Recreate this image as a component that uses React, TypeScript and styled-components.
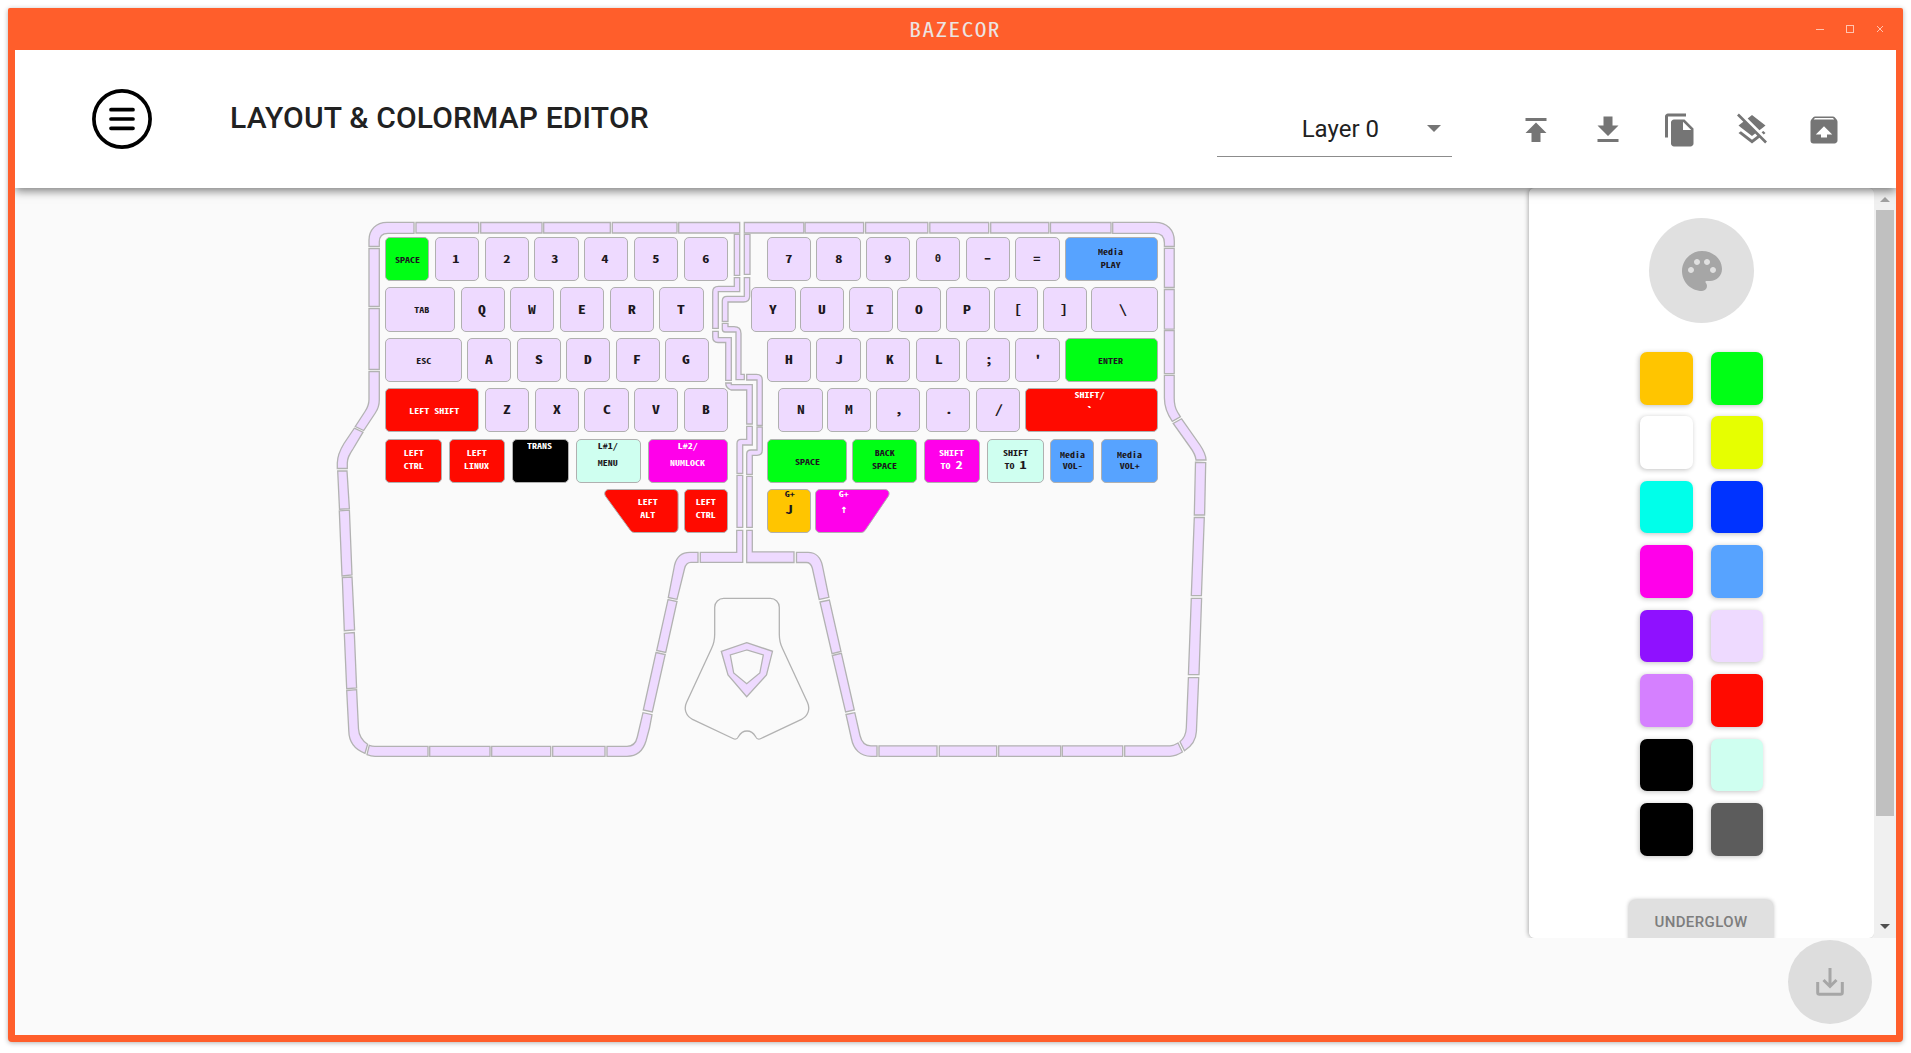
import React from "react";
import styled, { createGlobalStyle } from "styled-components";
import { MdPublish, MdGetApp, MdFileCopy, MdLayersClear, MdUnarchive, MdPalette } from "react-icons/md";

const MONO = `"Noto Sans Mono CJK SC", "DejaVu Sans Mono", monospace`;
const MONO_ALT = `"DejaVu Sans Mono", monospace`;
const ORANGE = "#ff5e2b";
const LILAC = "#eedaff";
const RED = "#ff0a00";
const GREEN = "#00ff15";
const BLUE = "#57a3ff";
const PINK = "#ff00ea";
const MINT = "#cffff0";
const AMBER = "#ffc500";

const Global = createGlobalStyle`
  *, *::before, *::after { box-sizing: border-box; }
  html, body { margin: 0; background: #fff; }
  body { font-family: Roboto, "Liberation Sans", sans-serif; color: #212121; overflow: hidden; }
`;

const Page = styled.div`
  height: 1053px;
  padding: 8px 8px 11px;
`;

const Frame = styled.div`
  display: flex;
  flex-direction: column;
  height: 1034px;
  padding: 0 7px 7px;
  background: ${ORANGE};
  border-radius: 2px 2px 4px 4px;
  box-shadow: 0 1px 5px rgba(0, 0, 0, 0.3);
`;

const TitleBar = styled.div`
  display: grid;
  grid-template-columns: 1fr auto 1fr;
  align-items: center;
  height: 42px;
  flex: none;
`;

const AppName = styled.div`
  grid-column: 2;
  font: 400 19.4px/40px ${MONO};
  letter-spacing: 1.2px;
  transform: scaleX(1.2);
  color: #ece4e2;
`;

const WindowButtons = styled.div`
  display: flex;
  justify-content: flex-end;
  gap: 18px;
  padding-right: 10px;
  svg { display: block; }
`;

const Header = styled.header`
  display: flex;
  align-items: center;
  height: 138px;
  flex: none;
  padding: 0 54px 0 77px;
  background: #fff;
  position: relative;
  z-index: 2;
  box-shadow: 0 3px 9px rgba(0, 0, 0, 0.5);
  clip-path: inset(0 0 -20px 0);
`;

const Heading = styled.h1`
  margin: -2px auto 0 78px;
  font-size: 30px;
  font-weight: 500;
  line-height: 36px;
  letter-spacing: 0.17px;
  white-space: nowrap;
`;

const LayerSelect = styled.div`
  display: flex;
  align-items: center;
  justify-content: flex-end;
  width: 235px;
  height: 55px;
  margin: 20px 66px 0 0;
  padding-right: 11px;
  border-bottom: 1px solid #8c8c8c;
  font-size: 24px;
  gap: 48px;
`;

const Caret = styled.i`
  border: 7px solid transparent;
  border-top-color: #757575;
  border-bottom: 0;
`;

const Tools = styled.div`
  display: flex;
  gap: 36px;
  margin-top: 22px;
  color: #757575;
  font-size: 36px;
  svg { display: block; }
`;

const Main = styled.main`
  display: flex;
  height: 750px;
  flex: none;
  background: #fafafa;
`;

const Canvas = styled.section`
  flex: 1;
  padding: 49px 0 0 370px;
`;

const Board = styled.div`
  position: relative;
  display: flex;
  width: 774px;
`;

const Outline = styled.svg`
  position: absolute;
  left: -55px;
  top: -22px;
  width: 885px;
  height: 550px;
  stroke: #b2b2b2;
  stroke-width: 1.3;
  fill: ${LILAC};
`;

const Half = styled.div<{ $w: number }>`
  position: relative;
  display: flex;
  flex-direction: column;
  width: ${(p) => p.$w}px;
  gap: 6.2px;
`;

const Row = styled.div<{ $lead: number; $gap: number }>`
  display: flex;
  height: 44.2px;
  gap: ${(p) => p.$gap}px;
  padding-left: ${(p) => p.$lead}px;
`;

const KeyCap = styled.div<{ $w: number; $bg: string; $ink: string; $pull: number; $shaped: boolean }>`
  display: grid;
  flex: none;
  justify-items: center;
  align-items: start;
  width: ${(p) => p.$w}px;
  height: 44.2px;
  margin-left: ${(p) => p.$pull}px;
  border: 1px solid ${(p) => (p.$shaped ? "transparent" : "#b0b0b0")};
  border-radius: 5px;
  background: ${(p) => (p.$shaped ? "none" : p.$bg)};
  color: ${(p) => p.$ink};
`;

const KeyShape = styled.svg`
  grid-area: 1 / 1;
  margin: -1px;
  overflow: visible;
  stroke: #b0b0b0;
`;

const Legend = styled.span<{ $y: number; $s: number; $dx: number; $alt: boolean }>`
  grid-area: 1 / 1;
  position: relative;
  height: ${(p) => p.$s}px;
  margin-top: ${(p) => p.$y - 1 - p.$s * 0.936}px;
  margin-left: ${(p) => p.$dx * 2}px;
  font: 700 ${(p) => p.$s}px/${(p) => p.$s}px ${(p) => (p.$alt ? MONO_ALT : MONO)};
  transform: scaleX(${(p) => (p.$alt ? 1 : 1.3)});
  white-space: pre;
  b { font-size: 11px; line-height: 1px; }
`;

const Drawer = styled.aside`
  display: flex;
  flex-direction: column;
  align-items: center;
  width: 345px;
  height: 750px;
  padding-top: 30px;
  overflow: hidden;
  background: #fff;
  border-radius: 6px;
`;

const DrawerEdge = styled.div`
  width: 345px;
  border-radius: 6px;
  box-shadow: -1px 0 4px rgba(0, 0, 0, 0.3);
  clip-path: inset(0 0 0 -10px);
`;

const PaletteButton = styled.button`
  display: grid;
  place-items: center;
  width: 105px;
  height: 105px;
  flex: none;
  padding: 0;
  border: 0;
  border-radius: 50%;
  background: #e0e0e0;
  color: #a6a6a6;
  font-size: 48px;
`;

const Swatches = styled.div`
  display: grid;
  grid-template-columns: 53px 52px;
  grid-auto-rows: 52.6px;
  gap: 11.85px 18px;
  margin: 29px 0 0 -1px;
  padding-left: 1px;
`;

const Swatch = styled.div<{ $c: string }>`
  border-radius: 7px;
  background: ${(p) => p.$c};
  box-shadow: -1px 1px 5px rgba(0, 0, 0, 0.24);
`;

const UnderglowButton = styled.button`
  flex: none;
  width: 144px;
  height: 44px;
  margin: 44.5px 1px 0 0;
  padding: 0;
  border: 0;
  border-radius: 6px;
  background: #e0e0e0;
  color: #7d7d7d;
  box-shadow: 0 0 4px rgba(0, 0, 0, 0.3);
  font: 500 15px/43px Roboto, sans-serif;
  letter-spacing: 0.4px;
`;

const ScrollTrack = styled.div`
  display: flex;
  flex-direction: column;
  align-items: center;
  width: 22px;
  padding: 9px 0 9px;
  background: #f0f0f0;
`;

const ScrollThumb = styled.div`
  width: 18px;
  height: 606px;
  margin: 8px 0 auto;
  background: #c0c0c0;
`;

const ScrollArrow = styled.i<{ $up?: boolean }>`
  border: 5px solid transparent;
  ${(p) => (p.$up ? "border-top: 0; border-bottom-color: #a0a0a0;" : "border-bottom: 0; border-top-color: #505050;")}
`;

const Footer = styled.footer`
  display: flex;
  justify-content: flex-end;
  height: 97px;
  padding: 2px 24px 0 0;
  background: #fafafa;
`;

const SaveButton = styled.button`
  display: grid;
  place-items: center;
  width: 84px;
  height: 84px;
  padding: 0;
  border: 0;
  border-radius: 50%;
  background: #dddddd;
`;

type Line = { t: React.ReactNode; y: number; s: number; dx?: number; alt?: boolean };
type KeyDef = { w: number; bg?: string; ink?: string; pull?: number; shape?: string; lines: Line[] };
type RowDef = { lead: number; gap: number; keys: KeyDef[] };

const S = 7.7;
const L = 12;
const D = 11;
const INK = "#1c1720";

const ch = (t: string, dx = 0, size = L, pull = 0): KeyDef => ({ w: 44.2, pull, lines: [{ t, y: 26.5, s: size, dx }] });
const num = (t: string, dx = 0) => ch(t, dx, D);
const word = (t: string, w: number, bg = LILAC, ink = INK, dx = 0): KeyDef => ({ w, bg, ink, lines: [{ t, y: 26.3, s: S, dx }] });
const two = (a: string, b: React.ReactNode, w: number, bg: string, ink = "#fff", ya = 18, yb = 31, dx = 0, pull = 0): KeyDef => ({
  w, bg, ink, pull, lines: [{ t: a, y: ya, s: S, dx }, { t: b, y: yb, s: S, dx }],
});

const leftRows: RowDef[] = [
  { lead: 0, gap: 5.6, keys: [word("SPACE", 44.2, GREEN, INK, 0.6), num("1", -0.8), num("2"), num("3", -1.2), num("4", -1), num("5", -0.7), num("6")] },
  { lead: 0.4, gap: 5.5, keys: [word("TAB", 69.7, LILAC, INK, 1.5), ch("Q", -0.5), ch("W"), ch("E"), ch("R"), ch("T")] },
  { lead: 0.4, gap: 5.35, keys: [word("ESC", 76.3, LILAC, INK, 0.6), ch("A"), ch("S"), ch("D"), ch("F", -0.6), ch("G", -0.8)] },
  { lead: 0.4, gap: 5.55, keys: [word("LEFT SHIFT", 94, RED, "#fff", 2), ch("Z"), ch("X", 0.5), ch("C", 0.8), ch("V", -0.5), ch("B", 0.4)] },
  {
    lead: 0.4, gap: 7.3, keys: [
      two("LEFT", "CTRL", 56.2, RED), two("LEFT", "LINUX", 56.2, RED, "#fff", 18, 31, -0.4),
      { w: 56.2, bg: "#000", ink: "#fff", lines: [{ t: "TRANS", y: 10.8, s: S, dx: -0.5 }] },
      two("L#1/", "MENU", 65, MINT, INK, 10.8, 27.3, -0.8), two("L#2/", "NUMLOCK", 80, PINK, "#fff", 10.8, 27.3, -0.4),
    ],
  },
  {
    lead: 219, gap: 5.7, keys: [
      { ...two("LEFT", "ALT", 74.6, RED, "#fff", 16, 29, 6.7), shape: "M5 .5H69.6a4.5 4.5 0 0 1 4.5 4.5V39a4.5 4.5 0 0 1-4.5 4.5H30.5a5 5 0 0 1-4-2L1.5 7.2C-.5 4 1.500 .5 5 .5Z" },
      two("LEFT", "CTRL", 44, RED, "#fff", 16, 29, -0.6),
    ],
  },
];

const rightRows: RowDef[] = [
  {
    lead: 15.2, gap: 5.6, keys: [
      num("7"), num("8"), num("9"),
      { w: 44.2, lines: [{ t: "0", y: 26.3, s: 10.6, alt: true }] },
      { w: 44.2, lines: [{ t: "-", y: 26, s: 14, dx: -0.5 }] },
      num("=", -0.4), two("Media", "PLAY", 93, BLUE, INK, 18.6, 30.9, -0.9),
    ],
  },
  { lead: 0, gap: 4.4, keys: [ch("Y", -0.5), ch("U"), ch("I", -1.1), ch("O", -0.5), ch("P", -1), ch("[", 1.2), ch("]", -1.2), { ...ch("\\", -1.8), w: 66.6 }] },
  { lead: 15.2, gap: 5.6, keys: [ch("H"), ch("J", 1), ch("K", 1.8), ch("L", 0.8), ch(";", 1), ch("'"), word("ENTER", 93, GREEN, INK, -0.8)] },
  {
    lead: 27, gap: 5.5, keys: [
      ch("N", 0.5), ch("M", 0, L, -1.5), ch(",", 1), ch(".", 1), ch("/", 1),
      { w: 133, bg: RED, ink: "#fff", lines: [{ t: "SHIFT/", y: 10.3, s: S, dx: -2.4 }, { t: "`", y: 27, s: 11, dx: -2.4 }] },
    ],
  },
  {
    lead: 15.5, gap: 6.7, keys: [
      word("SPACE", 79.7, GREEN, INK, 1), two("BACK", "SPACE", 64.6, GREEN, INK, 18, 31, 0, -1),
      two("SHIFT", <>TO <b>2</b></>, 56.5, PINK), two("SHIFT", <>TO <b>1</b></>, 57, MINT, INK),
      two("Media", "VOL-", 44, BLUE, INK, 19.5, 31.2), two("Media", "VOL+", 57, BLUE, INK, 19.5, 31.2),
    ],
  },
  {
    lead: 15.2, gap: 4.6, keys: [
      { w: 44, bg: AMBER, lines: [{ t: "G+", y: 8.8, s: S, dx: 0.8 }, { t: "J", y: 25.4, s: L, dx: 0.8 }] },
      { w: 74.8, bg: PINK, ink: "#fff", shape: "M69.800 .5H5A4.500 4.500 0 0 0 .5 5V39A4.500 4.500 0 0 0 5 43.500H46a5 5 0 0 0 4-2L73.300 7.200C75.300 4 73.300 .5 69.800 .5Z", lines: [{ t: "G+", y: 8.8, s: S, dx: -8.500 }, { t: "↑", y: 26, s: 11.5, dx: -8.500, alt: true }] },
    ],
  },
];

const box = (x1: number, y1: number, x2: number, y2: number) => `M${x1} ${y1}H${x2}V${y2}H${x1}Z`;

// Underglow LED segments, grouped by the side of the case they run along.
const ledPaths: string[] = [
  // top edge
  "M414 222.300H387C376 222.300 369 230 369 240V246.300H379.300V242C379.300 237 382 233.300 388 233.300H414Z",
  ...[[416, 478.700], [480.700, 542], [543.700, 610.300], [612.300, 677], [678.700, 739.700], [744.300, 803.800], [805.100, 863.600], [865.600, 927.800], [929.800, 988.700], [990.700, 1048.800], [1050.500, 1111]].map(([a, b]) => box(a, 222.500, b, 233)),
  "M1112.700 222.300H1155C1167 222.300 1174.300 230 1174.300 241V246.500H1164.400V243C1164.400 237 1161 233.300 1155 233.300H1112.700Z",
  // left edge
  box(369, 248.500, 379.300, 306.500), box(369, 308.700, 379.300, 369.300),
  "M369 371.500H379.300V400C379.300 405 378 409 375.300 413L363.700 430.500L355.300 426.500L365 411.500C368 407 369 404 369 399.500Z",
  "M354.300 428.200L363 432.200L353.300 448.500C349 455 347.300 458 347.300 463V468.500H337.300V463C337.500 455 340 450 344 443.500Z",
  "M337.700 471H347L349.400 508.700L339.500 509.200Z",
  "M339.300 510.800L349.400 510.200L352 575L342 576Z",
  "M342.300 577.500L352 577L354.600 630L344.300 630.700Z",
  "M344.300 633.300L354.300 632.500L356.600 688L346.700 688.700Z",
  "M346.700 690.500L356.600 689.700L358.500 729C359 736 362 740.500 367.600 744.200L365 753.300C355 749.500 349 742 348.800 731Z",
  // bottom left
  "M369.300 745.300Q372 746.300 375 746.300H428V756.300H375Q371 756.300 367 754.600Z",
  box(429.700, 746.300, 490, 756.300), box(491.700, 746.300, 550.700, 756.300), box(552.700, 746.300, 605, 756.300),
  "M607 746.300H627C632 746.300 636 743 637.300 737L643 712.700L652 714.700L649.500 728L646 741C643 751 636 756.300 627 756.300H607Z",
  "M656 652.500L665.200 654.500L652.300 712L643.300 710Z",
  "M668 599.700L677 601.500L665.700 652.500L656.700 650.500Z",
  "M668.300 597.500L677 599.300L684.600 568.500C685.500 564.500 687.500 562.300 691 562.300H698V552.300H690C682 552.300 676.500 557 674.600 565Z",
  "M700.300 552.300H736.700V530.300H742.700V562.300H700.300Z",
  "M746.700 530.300H752.300V551.800H794V562.500H746.700Z",
  // bottom right
  "M796.500 552.300H808C816 552.300 821 558 822.500 566L828.900 597.300L819.200 599.500L812.300 568C811 564 809.500 562.500 806.500 562.500H796.500Z",
  "M820 602L829.400 600L841 651.500L832 653.700Z",
  "M832.300 655.500L841.400 653.300L854.300 710L845.600 712Z",
  "M846 714.500L854.800 712.700L860 735.500C861.500 742 865 745.800 871 745.800H877V756.300H871C860 756.300 853.500 749 851.500 739Z",
  box(879, 745.800, 937, 756.300), box(939.300, 745.800, 996.700, 756.300), box(998.700, 745.800, 1060.700, 756.300), box(1062.300, 745.800, 1122.700, 756.300),
  "M1124.700 745.800H1170Q1174 745.500 1178 743L1182.400 752Q1176 756 1170 756.300H1124.700Z",
  "M1180 741.700L1184.500 750.700C1192 746 1196 740 1196.400 731.500L1198.700 677.700H1188.400L1186.300 728C1186 734 1184 738.500 1180 741.700Z",
  // right edge
  "M1188.400 674.700H1199L1201.600 598.300H1191.300Z",
  "M1191.300 595.700H1201.400L1204.300 517.500H1194.300Z",
  "M1194.300 515H1204.600L1205.700 462.700L1195.500 462.300Z",
  "M1206 460H1196C1195.500 455 1193 451 1190 447L1173.200 423.500L1181.600 418.800L1200 445C1204 451 1206 455 1206 460Z",
  "M1164.400 375.300H1174.200V398C1174.200 404 1175 408 1177.500 412L1180.400 416.800L1172.300 421.300C1166.500 413 1164.400 406 1164.400 398Z",
  box(1164.400, 330.700, 1174.200, 373.700), box(1164.400, 289.500, 1174.200, 329.200), box(1164.400, 248.300, 1174.200, 287.500),
  // split between the halves
  box(734.300, 234.300, 739.700, 275.300), box(744.300, 234.300, 750, 274.300),
  "M739.700 277.700H734.300V286.300H718.500Q712.700 286.300 712.700 292V328.300H718.300V291.700H739.700Z",
  "M749.700 277.700H744.300V296.300H727Q722.300 296.300 722.300 301V321.300H728V302H743.500Q749.700 302 749.700 296Z",
  "M712.700 331.300H718.300V337.700H731.300V380.300H725.700V342.500H718Q712.700 342.300 712.700 337Z",
  "M722.300 323.300H728V326.700H734Q741 326.700 741 333.500V374.300H744.300V379.700H736V332H725Q722.300 332 722.300 329Z",
  "M725.700 383H731.300V384.700H752.300V424H746.700V390H731Q725.700 388 725.700 383Z",
  "M746.700 374.300H756.500Q762.300 374.300 762.300 380V425.300H757V380H746.700Z",
  "M746.700 426.300H752.300V445H742.700V473.300H737V443.500Q737 439.300 741 439.300H746.700Z",
  "M757 427H762.300V450Q762.300 455.300 757 455.300H752.300V474.300H746.700V454Q746.700 450 751 450H757Z",
  box(737, 475.300, 742.700, 527.300), box(746.700, 476.300, 752.300, 527.300),
  // processor module emblem
  "M746.700 642.700L772.500 651.300L766.500 675L746.700 696.700L728 675L721.300 651.300ZM746.700 650L730.300 655L733.700 673L746.700 683.700L759.800 673L763.300 655Z",
];

const MODULE =
  "M723.700 598.300H770.300a9 9 0 0 1 9 9V634C779.300 641 780.500 644.500 782.500 648.500L807.500 702.500C810.500 709 808 716 801.500 719.300L761 738.500C757.500 740.200 756.500 738.500 755.500 736.500C753.500 733 750.500 731 747 731C743.500 731 740.500 733 738.500 736.500C737.500 738.500 736.500 740.200 733 738.500L692.500 719.300C686 716 683.500 709 686.500 702.500L711.500 648.500C713.500 644.500 714.700 641 714.700 634V607.300a9 9 0 0 1 9-9Z";

const swatchColors = [AMBER, GREEN, "#ffffff", "#e6ff00", "#00ffea", "#0033ff", PINK, BLUE, "#8f11ff", LILAC, "#d580ff", RED, "#000000", MINT, "#000000", "#5c5c5c"];

function Key({ k }: { k: KeyDef }) {
  return (
    <KeyCap $w={k.w} $bg={k.bg ?? LILAC} $ink={k.ink ?? INK} $pull={k.pull ?? 0} $shaped={!!k.shape}>
      {k.shape && (
        <KeyShape width={k.w} height={44.2}>
          <path d={k.shape} fill={k.bg} />
        </KeyShape>
      )}
      {k.lines.map((l, i) => (
        <Legend key={i} $y={l.y} $s={l.s} $dx={l.dx ?? 0} $alt={!!l.alt}>{l.t}</Legend>
      ))}
    </KeyCap>
  );
}

function KeyHalf({ rows, width }: { rows: RowDef[]; width: number }) {
  return (
    <Half $w={width}>
      {rows.map((r, i) => (
        <Row key={i} $lead={r.lead} $gap={r.gap}>
          {r.keys.map((k, j) => <Key key={j} k={k} />)}
        </Row>
      ))}
    </Half>
  );
}

export default function App() {
  return (
    <>
      <Global />
      <Page>
        <Frame>
          <TitleBar>
            <AppName>BAZECOR</AppName>
            <WindowButtons>
              <svg width="12" height="12"><path d="M2 6.500H10" stroke="#ffc4b0" /></svg>
              <svg width="12" height="12"><rect x="2.500" y="2.500" width="7" height="7" fill="none" stroke="#ffc4b0" /></svg>
              <svg width="12" height="12"><path d="M3 3L9 9M9 3L3 9" stroke="#ffc4b0" /></svg>
            </WindowButtons>
          </TitleBar>
          <Header>
            <svg width="60" height="60" fill="none" stroke="#000" strokeWidth="3.700">
              <circle cx="30" cy="30" r="28.100" />
              <path d="M19 20.700H41M19 30H41M19 39.300H41" strokeLinecap="round" />
            </svg>
            <Heading>LAYOUT &amp; COLORMAP EDITOR</Heading>
            <LayerSelect>Layer 0<Caret /></LayerSelect>
            <Tools>
              <MdPublish /><MdGetApp /><MdFileCopy /><MdLayersClear /><MdUnarchive />
            </Tools>
          </Header>
          <Main>
            <Canvas>
              <Board>
                <Outline viewBox="330 215 885 550">
                  {ledPaths.map((d, i) => <path key={i} d={d} fillRule="evenodd" />)}
                  <path d={MODULE} fill="none" />
                </Outline>
                <KeyHalf rows={leftRows} width={366.4} />
                <KeyHalf rows={rightRows} width={407} />
              </Board>
            </Canvas>
            <DrawerEdge>
              <Drawer>
                <PaletteButton><MdPalette /></PaletteButton>
                <Swatches>
                  {swatchColors.map((c, i) => <Swatch key={i} $c={c} />)}
                </Swatches>
                <UnderglowButton>UNDERGLOW</UnderglowButton>
              </Drawer>
            </DrawerEdge>
            <ScrollTrack>
              <ScrollArrow $up />
              <ScrollThumb />
              <ScrollArrow />
            </ScrollTrack>
          </Main>
          <Footer>
            <SaveButton>
              <svg width="32" height="32" fill="none" stroke="#a6a6a6" strokeWidth="3">
                <path d="M16 2V20M9.500 14L16 20.500L22.500 14M3.700 16V26.500Q3.700 28.300 5.500 28.300H26.500Q28.300 28.300 28.300 26.500V16" />
              </svg>
            </SaveButton>
          </Footer>
        </Frame>
      </Page>
    </>
  );
}
